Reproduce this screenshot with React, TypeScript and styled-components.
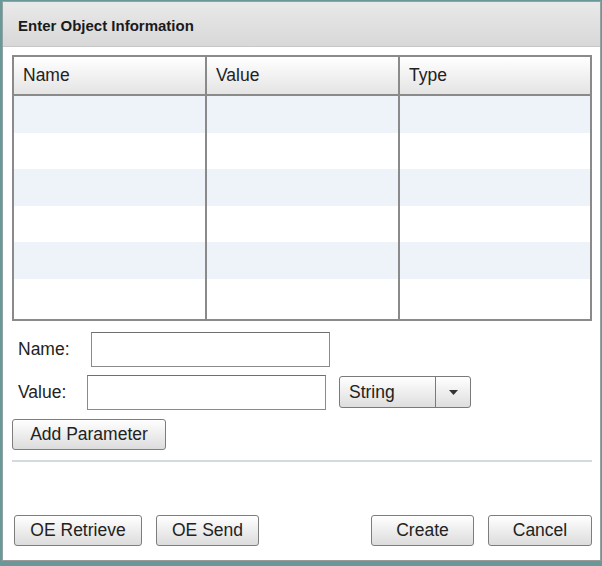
import styled, { createGlobalStyle } from 'styled-components'

const GlobalStyle = createGlobalStyle`
  html, body {
    margin: 0;
    padding: 0;
    background: #6a9898;
  }
  body {
    font-family: "Liberation Sans", Arial, sans-serif;
    color: #222;
  }
`

const rows = [0, 1, 2, 3, 4, 5]
const columns = ['Name', 'Value', 'Type']

export default function App() {
  return (
    <>
      <GlobalStyle />
      <Frame>
        <Panel>
          <Header>Enter Object Information</Header>
          <Body>
            <Table>
              <HeadRow>
                {columns.map((c) => (
                  <HeadCell key={c}>{c}</HeadCell>
                ))}
              </HeadRow>
              {rows.map((r) => (
                <DataRow key={r} $alt={r % 2 === 0} $last={r === rows.length - 1}>
                  {columns.map((c) => (
                    <DataCell key={c} />
                  ))}
                </DataRow>
              ))}
            </Table>

            <FieldRow $top={11}>
              <Label $width={73}>Name:</Label>
              <TextInput />
            </FieldRow>
            <FieldRow $top={8}>
              <Label $width={69}>Value:</Label>
              <TextInput />
              <Select>
                <SelectText>String</SelectText>
                <SelectArrow>
                  <svg width="9" height="5" viewBox="0 0 9 5">
                    <path d="M0 0 H9 L4.5 5 Z" fill="#333" />
                  </svg>
                </SelectArrow>
              </Select>
            </FieldRow>
            <AddRow>
              <Button $width={154}>Add Parameter</Button>
            </AddRow>
            <Separator />
            <Footer>
              <ButtonGroup>
                <Button $width={128}>OE Retrieve</Button>
                <Button $width={103}>OE Send</Button>
              </ButtonGroup>
              <ButtonGroup>
                <Button $width={103}>Create</Button>
                <Button $width={104}>Cancel</Button>
              </ButtonGroup>
            </Footer>
          </Body>
        </Panel>
      </Frame>
    </>
  )
}

const Frame = styled.div`
  width: 602px;
  height: 566px;
  box-sizing: border-box;
  padding: 1px 1px 5px 2px;
  background: #6a9898;
  display: flex;
`

const Panel = styled.div`
  flex: 1;
  display: flex;
  flex-direction: column;
  background: #fff;
  border: 1px solid #8fa3a3;
  border-bottom-color: #9a9a9a;
`

const Header = styled.div`
  height: 45px;
  flex-shrink: 0;
  display: flex;
  align-items: center;
  padding: 2px 0 0 15px;
  box-sizing: border-box;
  font-size: 15px;
  font-weight: bold;
  color: #1a1a1a;
  background: linear-gradient(#e9e9e9, #d8d8d8);
  border-bottom: 1px solid #c8c8c8;
`

const Body = styled.div`
  flex: 1;
  display: flex;
  flex-direction: column;
  padding: 8px 8px 14px 9px;
`

const Table = styled.div`
  display: flex;
  flex-direction: column;
  border: 2px solid #8a8a8a;
`

const HeadRow = styled.div`
  display: grid;
  grid-template-columns: 191px 193px 1fr;
  height: 37px;
  background: linear-gradient(#ffffff, #e4e4e4);
  border-bottom: 2px solid #8a8a8a;
`

const HeadCell = styled.div`
  display: flex;
  align-items: center;
  padding-left: 9px;
  font-size: 17.5px;
  color: #222;
  & + & {
    border-left: 2px solid #8a8a8a;
  }
`

const DataRow = styled.div<{ $alt: boolean; $last: boolean }>`
  display: grid;
  grid-template-columns: 191px 193px 1fr;
  height: ${({ $last }) => ($last ? '40px' : '36.6px')};
  background: ${({ $alt }) => ($alt ? '#eef3fa' : '#ffffff')};
`

const DataCell = styled.div`
  & + & {
    border-left: 2px solid #8a8a8a;
  }
`

const FieldRow = styled.div<{ $top: number }>`
  display: flex;
  align-items: center;
  margin-top: ${({ $top }) => $top}px;
  padding-left: 6px;
`

const Label = styled.span<{ $width: number }>`
  width: ${({ $width }) => $width}px;
  font-size: 17.5px;
  color: #222;
`

const TextInput = styled.input.attrs({ type: 'text' })`
  width: 239px;
  height: 35px;
  box-sizing: border-box;
  border: 1px solid #8a8a8a;
  border-top-color: #6f6f6f;
  outline: none;
  margin: 0;
  font-family: inherit;
  font-size: 17px;
`

const Select = styled.div`
  margin-left: 13px;
  width: 132px;
  height: 32px;
  box-sizing: border-box;
  display: flex;
  border: 1px solid #7a7a7a;
  border-radius: 3px;
  background: linear-gradient(#ffffff, #dedede);
`

const SelectText = styled.div`
  flex: 1;
  display: flex;
  align-items: center;
  padding-left: 9px;
  font-size: 17.5px;
  color: #222;
  border-right: 1px solid #7a7a7a;
`

const SelectArrow = styled.div`
  width: 34px;
  display: flex;
  align-items: center;
  justify-content: center;
`

const AddRow = styled.div`
  display: flex;
  margin-top: 9px;
`

const Button = styled.button<{ $width: number }>`
  width: ${({ $width }) => $width}px;
  height: 31px;
  box-sizing: border-box;
  margin: 0;
  padding: 0;
  border: 1px solid #7d7d7d;
  border-radius: 3px;
  background: linear-gradient(#ffffff, #dcdcdc);
  font-family: inherit;
  font-size: 17.5px;
  color: #222;
  cursor: pointer;
`

const Separator = styled.div`
  margin-top: 10px;
  height: 2px;
  background: #d3dcdc;
`

const Footer = styled.div`
  margin-top: auto;
  display: flex;
  justify-content: space-between;
  padding: 0 0 0 2px;
`

const ButtonGroup = styled.div`
  display: flex;
  gap: 14px;
`
